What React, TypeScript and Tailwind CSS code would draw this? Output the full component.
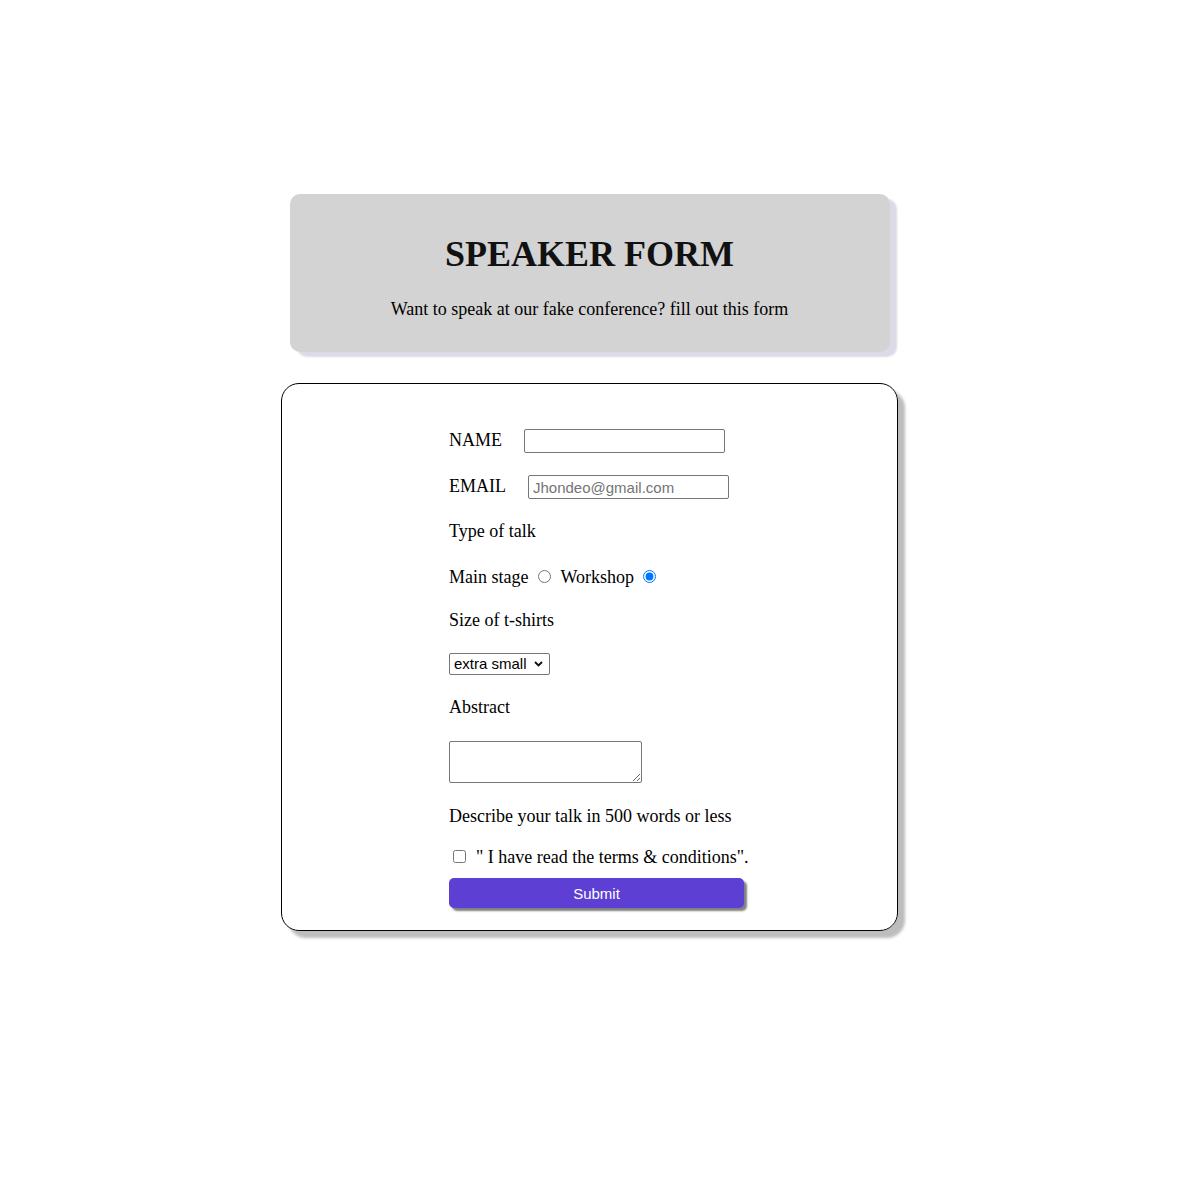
import React, { useState } from 'react'

function App() {
  const [talk, setTalk] = useState('workshop')
  const [size, setSize] = useState('xs')

  return (
    <div className="min-h-[1179px] bg-white pt-[194px] flex flex-col items-center font-['Liberation_Serif',serif] text-[18px] leading-[21px] text-black">
      {/* Header */}
      <header className="w-[600px] bg-[#d3d3d3] rounded-[10px] shadow-[7px_5px_2px_#dcdae6] pt-[40px] pb-[32px] text-center">
        <h1 className="text-[36px] leading-[41px] font-bold text-[#111]">SPEAKER FORM</h1>
        <p className="mt-[24px]">Want to speak at our fake conference? fill out this form</p>
      </header>

      {/* Form */}
      <form
        onSubmit={(e) => e.preventDefault()}
        className="mt-[31px] w-[617px] border border-black rounded-[18px] shadow-[7px_7px_3px_#bdbdbd] pl-[167px] pt-[45px] pb-[22px]"
      >
        <div className="flex items-start gap-[22px] h-[24px]">
          <label htmlFor="name" className="pt-[1px]">NAME</label>
          <input
            id="name"
            type="text"
            className="w-[201px] h-[24px] border border-[#767676] rounded-[2px] pl-[4px] font-['Liberation_Sans',sans-serif] text-[15px] outline-none"
          />
        </div>

        <div className="flex items-start gap-[22px] h-[24px] mt-[22px]">
          <label htmlFor="email" className="pt-[1px]">EMAIL</label>
          <input
            id="email"
            type="email"
            placeholder="Jhondeo@gmail.com"
            className="w-[201px] h-[24px] border border-[#767676] rounded-[2px] pl-[4px] font-['Liberation_Sans',sans-serif] text-[15px] placeholder:text-[#757575] outline-none"
          />
        </div>

        <p className="mt-[22px]">Type of talk</p>

        <div className="flex items-center mt-[24px] h-[21px]">
          <label htmlFor="main" className="pt-[2px]">Main stage</label>
          <input
            id="main"
            type="radio"
            name="talk"
            checked={talk === 'main'}
            onChange={() => setTalk('main')}
            className="m-0 ml-[10px] mr-[9px] w-[13px] h-[13px]"
          />
          <label htmlFor="workshop" className="pt-[2px]">Workshop</label>
          <input
            id="workshop"
            type="radio"
            name="talk"
            checked={talk === 'workshop'}
            onChange={() => setTalk('workshop')}
            className="m-0 ml-[9px] w-[13px] h-[13px]"
          />
        </div>

        <p className="mt-[23px]">Size of t-shirts</p>

        <div className="relative mt-[22px] w-[101px] h-[22px]">
          <select
            value={size}
            onChange={(e) => setSize(e.target.value)}
            className="appearance-none w-[101px] h-[22px] border border-[#767676] rounded-[2px] pl-[4px] pr-[18px] font-['Liberation_Sans',sans-serif] text-[15px] leading-[20px] text-black bg-white outline-none"
          >
            <option value="xs">extra small</option>
            <option value="s">small</option>
            <option value="m">medium</option>
            <option value="l">large</option>
          </select>
          <svg className="absolute right-[7px] top-[8px] pointer-events-none" width="9" height="6" viewBox="0 0 9 6" fill="none">
            <path d="M1 1l3.5 3.5L8 1" stroke="#111" strokeWidth="1.9" />
          </svg>
        </div>

        <p className="mt-[22px]">Abstract</p>

        <textarea className="block mt-[23px] w-[193px] h-[42px] border border-[#767676] rounded-[2px] outline-none resize" />

        <p className="mt-[23px]">Describe your talk in 500 words or less</p>

        <div className="flex items-center mt-[19px] h-[21px]">
          <input type="checkbox" id="terms" className="m-0 ml-[4px] mr-[10px] w-[13px] h-[13px]" />
          <label htmlFor="terms" className="pt-[1px]">" I have read the terms &amp; conditions".</label>
        </div>

        <button
          type="submit"
          className="block mt-[11px] w-[295px] h-[30px] bg-[#5d3fd3] rounded-[5px] shadow-[3px_3px_2px_#808080] text-white font-['Liberation_Sans',sans-serif] text-[15px]"
        >
          Submit
        </button>
      </form>
    </div>
  )
}

export default App
